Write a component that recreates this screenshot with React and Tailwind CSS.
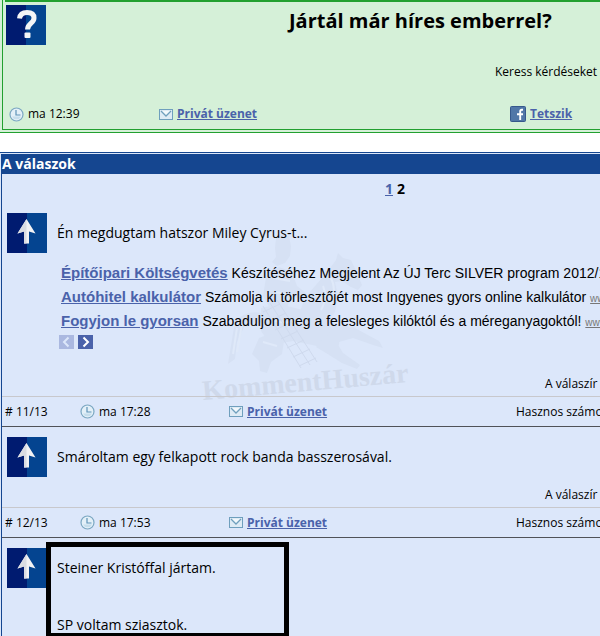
import React from "react";

const comic = "font-['Comic_Sans_MS','Open_Sans',sans-serif]";

function ClockIcon() {
  return (
    <svg width="15" height="15" viewBox="0 0 15 15" className="shrink-0" aria-hidden="true">
      <circle cx="7.5" cy="7.5" r="6.5" fill="#e3f0f8" stroke="#7ba7c2" strokeWidth="1.2" />
      <path d="M3 9.5a5 5 0 0 0 9 0z" fill="#c6deec" />
      <path d="M7 3v5h4.5" fill="none" stroke="#5e93b8" strokeWidth="1.2" />
    </svg>
  );
}

function MailIcon() {
  return (
    <svg width="14" height="11" viewBox="0 0 14 11" className="shrink-0" aria-hidden="true">
      <rect x="0.5" y="0.5" width="13" height="10" fill="#deebf5" stroke="#6f9fbd" />
      <path d="M2 2l5 5 5-5" fill="#f2f8fc" stroke="#6f9fbd" strokeWidth="1.3" />
    </svg>
  );
}

function FacebookIcon() {
  return (
    <svg width="16" height="16" viewBox="0 0 16 16" className="shrink-0" aria-hidden="true">
      <rect x="0.5" y="0.5" width="15" height="15" rx="1" fill="#5177a8" stroke="#36588c" />
      <path d="M13 3.8h-1.2c-1 0-1.6.6-1.6 1.6V14M7 8.2h6" fill="none" stroke="#fff" strokeWidth="1.9" />
    </svg>
  );
}

function Tile({ children }) {
  return (
    <svg width="40" height="40" viewBox="0 0 40 40" className="shrink-0" aria-hidden="true">
      <rect width="40" height="40" fill="#044490" />
      <rect width="20" height="40" fill="#001b70" />
      {children}
    </svg>
  );
}

function QuestionTile() {
  return (
    <Tile>
      <path d="M13.5 13.5C14 9.5 17 7.500 21 7.500c4.500 0 7 2 7 5.500 0 5.500-6.500 5.500-6.500 11.500" fill="none" stroke="#f4f4f6" strokeWidth="5" />
      <rect x="18.5" y="27.5" width="6" height="5.500" rx="1" fill="#f4f4f6" />
    </Tile>
  );
}

function ArrowTile() {
  return (
    <Tile>
      <path d="M19.5 6L28.5 20.5 22 18.5V30.5H17V18.5L10.5 20.5Z" fill="#f2f2f4" />
      <path d="M19.5 6L10.5 20.5 17 18.5V30.5H19.5Z" fill="#dadce2" />
    </Tile>
  );
}

function Watermark() {
  return (
    <svg width="215" height="175" viewBox="0 0 215 175" className="absolute top-[27px] left-[195px] -z-10" aria-hidden="true">
      <g fill="#d6e1f4">
        <path d="M79 8l5-4 8 2 2 10-1 10-5 7-8 3-5-4 4-5-1-9z" />
        <path d="M70 42l12-5 13 5 5 14 10 8-4 6-12-4-4 12-16 2-8-14z" />
        <path d="M128 45l11-15 2-7 5 5 8 2 6 13 5 12-4 5-7-3-9-6-7 1 3 14-3 16-10 12-16 4-10-14 6-16 10-12z" />
        <path d="M64 78l18-4 24 6 26 8 12 16-3 14-21-2-24-5-22 4-10-14z" />
        <path d="M138 94l18 3 26 14 4 7-10-3-20-7-14 4-12-6z" />
        <path d="M124 110l16 3 6 10 17 12-3 4-15-6-16-10-10-6z" />
        <path d="M38 91q12-11 26-8l2 9-18 3-8 17-2 17-7 5z" />
        <path d="M62 108q16-8 25 3l-2 13-11 8-4 11-7-2-1-10-7-7z" />
      </g>
      <g fill="none" stroke="#dfe9f9" strokeWidth="2">
        <path d="M76 48l17 3M78 62l20 4M134 48q6 12 0 26M126 56q5 12-2 24M72 88q14 8 34 2M66 112l14 4M40 98l-4 26M45 94l-5 28" />
      </g>
      <g fill="none" stroke="#cfdaee">
        <path d="M66 76l38 62M73 73l40 62M80 70l40 62M66 82l17-8M72 91l17-8M78 100l17-8M84 109l17-8M90 118l17-8M96 127l17-8M102 136l17-8" />
      </g>
      <text x="6" y="170" transform="rotate(-5 6 170)" fontSize="28" fontWeight="700" fill="#cfd9eb" fontFamily="'Old English Text MT','Liberation Serif',serif">KommentHuszár</text>
    </svg>
  );
}

function PrivateMessage() {
  return (
    <span className="flex items-center gap-1">
      <MailIcon />
      <a href="#uzenet" className="text-xs font-bold text-[#4a62aa] underline">Privát üzenet</a>
    </span>
  );
}

function PostFooter({ number, time }) {
  return (
    <>
      <p className="pl-[543px] text-xs leading-6">A válaszír</p>
      <div className="grid h-[30px] grid-cols-[75px_149px_287px_auto] items-center border-t border-[#c8c8cc] pl-[3px] text-xs">
        <span># {number}</span>
        <span className="flex items-center gap-1">
          <ClockIcon />
          {time}
        </span>
        <PrivateMessage />
        <span>Hasznos számod</span>
      </div>
    </>
  );
}

function Ad({ title, text, url }) {
  return (
    <li className="h-6">
      <a href="#hirdetes" className="text-[15px] font-bold text-[#4a62aa] underline">{title}</a>{" "}
      {text}{" "}
      {url && <a href="#hirdetes" className="text-[10px] text-[#777] underline">{url}</a>}
    </li>
  );
}

export default function App() {
  return (
    <div className={`${comic} overflow-hidden bg-white text-black whitespace-nowrap`}>
      <section className="border-b border-[#22a030] bg-[#d5f0d8] pb-[2px] pl-[2px]">
        <div className="border-b border-l border-[#22a030] pl-[2px]">
          <div className="h-[2px] bg-[#22a030]" />
          <div className="flex h-[60px] pt-[3px] pl-px">
            <QuestionTile />
            <h1 className="pl-[243px] text-[20px] leading-8 font-bold">Jártál már híres emberrel?</h1>
          </div>
          <p className="pl-[490px] text-xs leading-5">Keress kérdéseket</p>
          <div className="mt-5 grid h-[27px] grid-cols-[150px_351px_auto] items-start pt-1 pl-1 text-xs">
            <span className="flex items-center gap-1">
              <ClockIcon />
              ma 12:39
            </span>
            <PrivateMessage />
            <span className="flex items-center gap-1">
              <FacebookIcon />
              <a href="#tetszik" className="font-bold text-[#4a62aa] underline">Tetszik</a>
            </span>
          </div>
        </div>
      </section>

      <section className="mt-[19px] border-t border-[#154690] bg-[#dce7fa] pt-px pl-px">
        <h2 className="h-5 bg-[#154690] pl-px text-sm font-bold text-white">A válaszok</h2>
        <div className="border-l border-[#154690]">
          <nav className="flex h-[29px] items-center gap-1 pl-[383px] text-sm font-bold">
            <a href="#1" className="text-[#4a62aa] underline">1</a>
            <span>2</span>
          </nav>

          <article className="relative isolate border-b border-[#505258] pt-[10px]">
            <Watermark />
            <div className="flex gap-[10px] pl-[5px]">
              <ArrowTile />
              <p className="text-sm leading-10">Én megdugtam hatszor Miley Cyrus-t...</p>
            </div>
            <ul className="mt-2 pl-[59px] font-['Liberation_Sans',Arial,sans-serif] text-sm leading-6">
              <Ad title="Építőipari Költségvetés" text="Készítéséhez Megjelent Az ÚJ Terc SILVER program 2012/1" />
              <Ad title="Autóhitel kalkulátor" text="Számolja ki törlesztőjét most Ingyenes gyors online kalkulátor" url="www" />
              <Ad title="Fogyjon le gyorsan" text="Szabaduljon meg a felesleges kilóktól és a méreganyagoktól!" url="www" />
            </ul>
            <div className="mt-[2px] mb-[23px] flex gap-1 pl-[57px]">
              <button aria-label="Előző" className="h-[14px] w-[15px] bg-[#aab8e0]">
                <svg width="15" height="14" viewBox="0 0 15 14"><path d="M9.5 2.5L5 7l4.5 4.5" fill="none" stroke="#dce7fa" strokeWidth="2" /></svg>
              </button>
              <button aria-label="Következő" className="h-[14px] w-[15px] bg-[#4a62aa]">
                <svg width="15" height="14" viewBox="0 0 15 14"><path d="M5.5 2.5L10 7l-4.5 4.5" fill="none" stroke="#fff" strokeWidth="2" /></svg>
              </button>
            </div>
            <PostFooter number="11/13" time="ma 17:28" />
          </article>

          <article className="border-b border-[#505258] pt-[10px]">
            <div className="mb-[6px] flex gap-[10px] pl-[5px]">
              <ArrowTile />
              <p className="text-sm leading-10">Smároltam egy felkapott rock banda basszerosával.</p>
            </div>
            <PostFooter number="12/13" time="ma 17:53" />
          </article>

          <article className="relative pt-[10px]">
            <div className="flex gap-[10px] pl-[5px]">
              <ArrowTile />
              <p className="pt-[10px] pb-[2px] text-sm leading-[19px]">
                Steiner Kristóffal jártam.
                <br />
                <br />
                <br />
                SP voltam sziasztok.
              </p>
            </div>
            <div className="absolute top-1 bottom-0 left-[44px] w-[243px] border-[5px] border-b-[3px] border-black" />
          </article>
        </div>
      </section>
    </div>
  );
}
